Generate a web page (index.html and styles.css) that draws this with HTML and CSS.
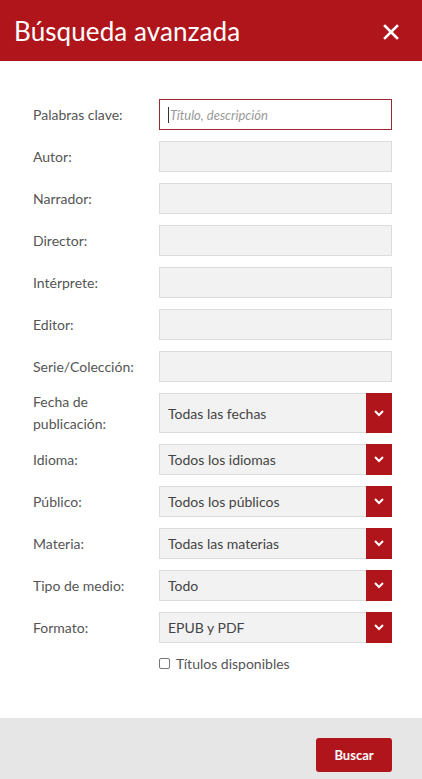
FILE: index.html
```html
<!DOCTYPE html>
<html lang="es">
<head>
<meta charset="utf-8">
<title>Búsqueda avanzada</title>
<link rel="stylesheet" href="styles.css">
</head>
<body>
<div class="modal">
  <header class="head">
    <h1 class="title">Búsqueda avanzada</h1>
    <button class="close" aria-label="Cerrar">
      <svg width="16" height="16" viewBox="0 0 16 16"><path d="M2 2 L14 14 M14 2 L2 14" stroke="#fff" stroke-width="2.6" stroke-linecap="square"/></svg>
    </button>
  </header>
  <form class="form">
    <div class="row"><label class="lbl">Palabras clave:</label><div class="field focus"><span class="caret"></span><span class="ph">Título, descripción</span></div></div>
    <div class="row"><label class="lbl">Autor:</label><div class="field"></div></div>
    <div class="row"><label class="lbl">Narrador:</label><div class="field"></div></div>
    <div class="row"><label class="lbl">Director:</label><div class="field"></div></div>
    <div class="row"><label class="lbl">Intérprete:</label><div class="field"></div></div>
    <div class="row"><label class="lbl">Editor:</label><div class="field"></div></div>
    <div class="row"><label class="lbl">Serie/Colección:</label><div class="field"></div></div>
    <div class="row tall"><label class="lbl">Fecha de<br>publicación:</label><div class="field select"><span class="val">Todas las fechas</span><span class="arrow"><svg width="10" height="7" viewBox="0 0 10 7"><path d="M1 1 L5 5 L9 1" fill="none" stroke="#fff" stroke-width="2"/></svg></span></div></div>
    <div class="row"><label class="lbl">Idioma:</label><div class="field select"><span class="val">Todos los idiomas</span><span class="arrow"><svg width="10" height="7" viewBox="0 0 10 7"><path d="M1 1 L5 5 L9 1" fill="none" stroke="#fff" stroke-width="2"/></svg></span></div></div>
    <div class="row"><label class="lbl">Público:</label><div class="field select"><span class="val">Todos los públicos</span><span class="arrow"><svg width="10" height="7" viewBox="0 0 10 7"><path d="M1 1 L5 5 L9 1" fill="none" stroke="#fff" stroke-width="2"/></svg></span></div></div>
    <div class="row"><label class="lbl">Materia:</label><div class="field select"><span class="val">Todas las materias</span><span class="arrow"><svg width="10" height="7" viewBox="0 0 10 7"><path d="M1 1 L5 5 L9 1" fill="none" stroke="#fff" stroke-width="2"/></svg></span></div></div>
    <div class="row"><label class="lbl">Tipo de medio:</label><div class="field select"><span class="val">Todo</span><span class="arrow"><svg width="10" height="7" viewBox="0 0 10 7"><path d="M1 1 L5 5 L9 1" fill="none" stroke="#fff" stroke-width="2"/></svg></span></div></div>
    <div class="row"><label class="lbl">Formato:</label><div class="field select"><span class="val">EPUB y PDF</span><span class="arrow"><svg width="10" height="7" viewBox="0 0 10 7"><path d="M1 1 L5 5 L9 1" fill="none" stroke="#fff" stroke-width="2"/></svg></span></div></div>
    <div class="check"><span class="box"></span><span class="ctext">Títulos disponibles</span></div>
  </form>
  <footer class="foot">
    <button class="btn" type="button">Buscar</button>
  </footer>
</div>
</body>
</html>
```
FILE: styles.css
```css
* { box-sizing: border-box; }
html, body { margin: 0; padding: 0; background: #fff; }
body { font-family: Lato, "Open Sans", sans-serif; color: #555; width: 422px; height: 779px; overflow: hidden; }
.modal { display: flex; flex-direction: column; height: 779px; }
.head { background: #af151b; height: 61px; display: flex; align-items: center; justify-content: space-between; padding: 0 23px 0 14px; flex-shrink: 0; }
.title { margin: 0; color: #fff; font-weight: 400; font-size: 26px; letter-spacing: 0.1px; }
.close { background: none; border: 0; padding: 0; width: 16px; height: 16px; display: flex; margin-top: 3px; }
.form { flex: 1; padding: 38px 30px 0 33px; display: flex; flex-direction: column; gap: 11px; }
.row { display: grid; grid-template-columns: 126px 233px; grid-template-rows: 31px; align-items: center; flex-shrink: 0; }
.row.tall { grid-template-rows: 40px; }
.lbl { font-size: 14px; color: #555; line-height: 22px; }
.field { height: 100%; background: #f2f2f2; border: 1px solid #dcdcdc; position: relative; display: flex; align-items: center; }
.field.focus { background: #fff; border-color: #9a2a30; padding-left: 8px; }
.caret { width: 1px; height: 16px; background: #333; margin-right: 1px; }
.ph { font-style: italic; font-size: 13px; color: #999; }
.select { padding-left: 8px; }
.val { flex: 1; font-size: 14px; color: #444; }
.arrow { width: 26px; height: calc(100% + 2px); margin: -1px -1px -1px 0; background: #af151b; display: flex; align-items: center; justify-content: center; }
.check { display: flex; align-items: center; gap: 6px; margin-left: 126px; margin-top: 1px; }
.box { width: 11px; height: 11px; border: 1px solid #777; border-radius: 2px; background: #fff; }
.ctext { font-size: 14px; color: #555; }
.foot { height: 61px; flex-shrink: 0; background: #e6e6e6; display: flex; justify-content: flex-end; align-items: flex-start; padding: 20px 30px 0 0; }
.btn { width: 76px; height: 34px; background: #af151b; color: #fff; border: 0; border-radius: 3px; font-family: Lato, sans-serif; font-weight: 700; font-size: 13px; }
```
